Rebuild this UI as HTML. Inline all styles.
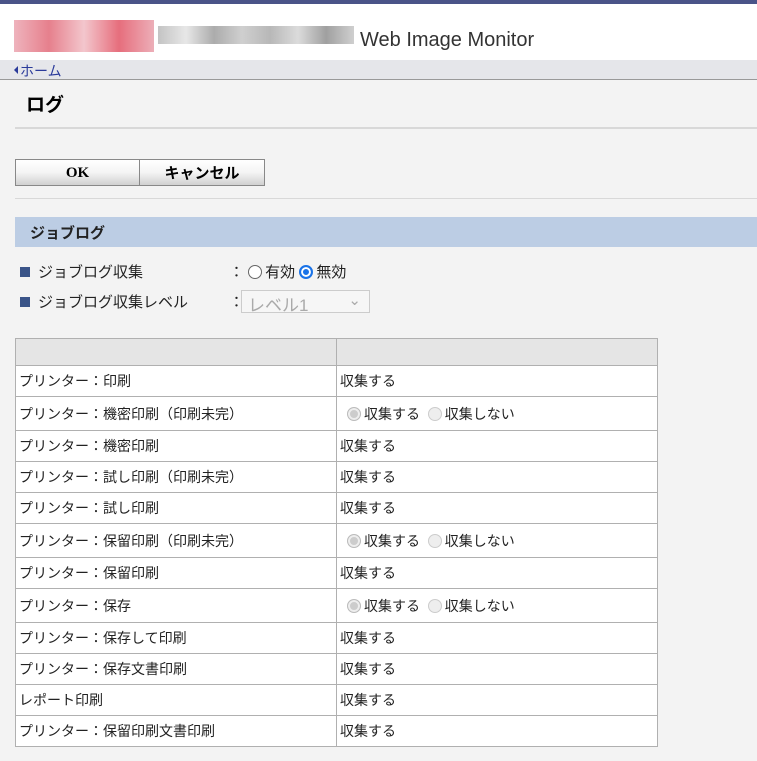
<!DOCTYPE html>
<html><head><meta charset="utf-8"><style>
*{box-sizing:border-box}
body{margin:0;width:757px;height:761px;overflow:hidden;background:#f3f3f3;font-family:"Liberation Sans","Noto Sans CJK JP",sans-serif;font-size:14px;color:#222;position:relative}
.top{position:absolute;left:0;top:0;width:757px;height:60px;background:#fff;border-top:4px solid #4a5488}
.logo{position:absolute;top:16px;height:32px}
.wim{position:absolute;left:360px;top:25px;font-size:20px;color:#333}
.nav{position:absolute;left:0;top:60px;width:757px;height:20px;background:#e5e6ea;border-bottom:1px solid #999}
.nav span{position:absolute;left:20px;top:1px;color:#2a3a9a;font-size:14px}
.nav i{position:absolute;left:14px;top:6px;border:4px solid transparent;border-right:4px solid #2a3a9a;border-left:0;width:0;height:0}
h1{position:absolute;left:26px;top:90px;margin:0;font-size:19px;font-weight:bold;color:#000}
.hr{position:absolute;left:15px;width:742px;height:2px;background:#d8d8d8}
.btn{position:absolute;top:159px;height:27px;border:1px solid #888;background:linear-gradient(#fff,#f4f4f4 50%,#d0d0d0);font-weight:bold;text-align:center;line-height:27px;font-size:15px;color:#000}
.sec{position:absolute;left:15px;top:217px;width:742px;height:30px;background:#bccde4;font-weight:bold;padding:5px 0 0 15px;font-size:15px}
.lbl{position:absolute;left:20px;font-size:15px}
.lbl b{display:inline-block;width:10px;height:10px;background:#3a5488;margin-right:8px}
.rad{display:inline-block;width:14px;height:14px;border-radius:50%;border:1px solid #666;background:#fff;vertical-align:-2px;margin-right:3px}
.rad.on{border:2px solid #1a73e8;box-shadow:inset 0 0 0 2px #fff;background:#1a73e8}
.rad.dis{border:1px solid #ccc;background:#eee}
.rad.dison{border:1px solid #bbb;background:#ccc;box-shadow:inset 0 0 0 2px #eee}
table{position:absolute;left:15px;top:338px;border-collapse:collapse;width:643px;font-size:14px}
td{border:1px solid #b0b0b0;background:#fff;padding:0 3px;height:31px}
tr.h td{background:#e5e5e5;height:27px}
tr.r td{height:34px}
tr.r td:last-child{padding-left:10px}
td:first-child{width:321px}
</style></head><body>
<div class="top">
<div class="logo" style="left:14px;width:140px;background:linear-gradient(90deg,#eaa0ac,#e06070,#f0b8c0,#e04a5c,#e89aa6);opacity:.8"></div>
<div class="logo" style="left:158px;width:196px;top:22px;height:18px;background:linear-gradient(90deg,#aaa,#ddd,#888,#bbb,#999,#ccc,#777,#bbb);opacity:.7"></div>
<div class="wim">Web Image Monitor</div>
</div>
<div class="nav"><i></i><span>ホーム</span></div>
<h1>ログ</h1>
<div class="hr" style="top:127px"></div>
<div class="btn" style="left:15px;width:125px;font-family:'Liberation Serif',serif">OK</div>
<div class="btn" style="left:139px;width:126px">キャンセル</div>
<div class="hr" style="top:198px;height:1px"></div>
<div class="sec">ジョブログ</div>
<div class="lbl" style="top:261px"><b></b>ジョブログ収集</div>
<div class="lbl" style="top:261px;left:229px">：&nbsp;<span class="rad"></span>有効 <span class="rad on"></span>無効</div>
<div class="lbl" style="top:291px"><b></b>ジョブログ収集レベル</div>
<div class="lbl" style="top:291px;left:229px">：</div>
<div style="position:absolute;left:241px;top:290px;width:129px;height:23px;border:1px solid #ccc;background:#f6f6f6;color:#aaa;font-size:17px;padding:0 6px">レベル1<span style="position:absolute;right:8px;top:0;font-size:15px">⌄</span></div>
<table>
<tr class="h"><td></td><td></td></tr>
<tr><td>プリンター：印刷</td><td>収集する</td></tr>
<tr class="r"><td>プリンター：機密印刷（印刷未完）</td><td><span class="rad dison"></span>収集する&nbsp; <span class="rad dis"></span>収集しない</td></tr>
<tr><td>プリンター：機密印刷</td><td>収集する</td></tr>
<tr><td>プリンター：試し印刷（印刷未完）</td><td>収集する</td></tr>
<tr><td>プリンター：試し印刷</td><td>収集する</td></tr>
<tr class="r"><td>プリンター：保留印刷（印刷未完）</td><td><span class="rad dison"></span>収集する&nbsp; <span class="rad dis"></span>収集しない</td></tr>
<tr><td>プリンター：保留印刷</td><td>収集する</td></tr>
<tr class="r"><td>プリンター：保存</td><td><span class="rad dison"></span>収集する&nbsp; <span class="rad dis"></span>収集しない</td></tr>
<tr><td>プリンター：保存して印刷</td><td>収集する</td></tr>
<tr><td>プリンター：保存文書印刷</td><td>収集する</td></tr>
<tr><td>レポート印刷</td><td>収集する</td></tr>
<tr><td>プリンター：保留印刷文書印刷</td><td>収集する</td></tr>
</table>
</body></html>
